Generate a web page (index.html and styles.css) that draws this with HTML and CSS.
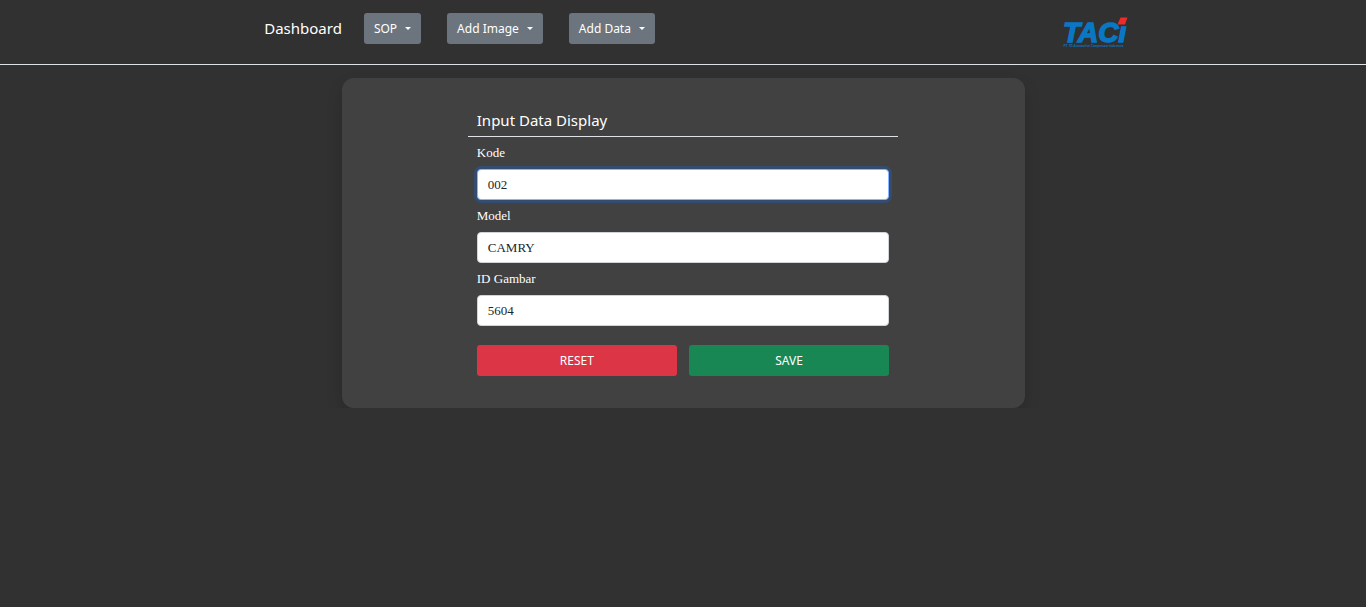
FILE: index.html
```html
<!DOCTYPE html>
<html lang="id">
<head>
<meta charset="utf-8">
<meta name="viewport" content="width=device-width, initial-scale=1">
<title>Input Data Display</title>
<link rel="stylesheet" href="styles.css">
</head>
<body>
<header class="topbar">
  <div class="topbar-inner">
    <nav class="menu">
      <a class="home" href="#">Dashboard</a>
      <div class="toggles">
        <button class="btn toggle" type="button">SOP <span class="caret"></span></button>
        <button class="btn toggle" type="button">Add Image <span class="caret"></span></button>
        <button class="btn toggle" type="button">Add Data <span class="caret"></span></button>
      </div>
    </nav>
    <svg class="logo" viewBox="0 0 130 64" role="img" aria-label="TACi">
      <text class="logo-name" x="0" y="51">TACı</text>
      <path class="logo-dot" d="M115 3h14l-5 14h-15z"/>
      <text class="logo-sub" x="1" y="61">PT. TD Automotive Compressor Indonesia</text>
    </svg>
  </div>
</header>
<main class="card">
  <form class="form">
    <h1 class="title">Input Data Display</h1>
    <div class="fields">
      <label class="label" for="kode">Kode</label>
      <input class="input" id="kode" type="text" value="002" autofocus>
      <label class="label" for="model">Model</label>
      <input class="input" id="model" type="text" value="CAMRY">
      <label class="label" for="gambar">ID Gambar</label>
      <input class="input" id="gambar" type="text" value="5604">
      <div class="actions">
        <button class="btn reset" type="reset">RESET</button>
        <button class="btn save" type="submit">SAVE</button>
      </div>
    </div>
  </form>
</main>
</body>
</html>
```

FILE: styles.css
```css
* {
  box-sizing: border-box;
}

body {
  margin: 0;
  background: #313131;
  color: #fff;
  font-family: "Noto Sans", "Open Sans", sans-serif;
  font-size: 12px;
}

.topbar {
  padding: 13px 0 16px;
  border-bottom: 1px solid #dee2e6;
}

.topbar-inner {
  display: flex;
  justify-content: space-between;
  align-items: flex-start;
  width: 66%;
  margin: 0 auto;
  padding: 0 6px 0 32px;
}

.menu {
  display: flex;
  align-items: flex-start;
  gap: 22px;
}

.toggles {
  display: flex;
  gap: 26px;
}

.home {
  color: #fff;
  font-size: 15px;
  line-height: 30px;
  text-decoration: none;
}

.btn {
  height: 31px;
  border: 0;
  border-radius: 3px;
  padding: 0 10px;
  color: #fff;
  font-family: inherit;
  font-size: 12px;
  line-height: 18px;
}

.toggle {
  display: flex;
  align-items: center;
  gap: 8px;
  background: #6c757d;
}

.caret {
  border-top: 3px solid #fff;
  border-left: 3px solid transparent;
  border-right: 3px solid transparent;
}

.logo {
  width: 65px;
  height: 32px;
  margin-top: 3px;
  overflow: visible;
}

.logo-name {
  fill: #0a77c4;
  stroke: #0a77c4;
  stroke-width: 3px;
  font: italic bold 56px "Liberation Sans", sans-serif;
}

.logo-dot {
  fill: #ee2b2b;
}

.logo-sub {
  fill: #0a77c4;
  font: italic bold 6px "Liberation Sans", sans-serif;
}

.card {
  width: 50%;
  margin: 13px auto 0;
  padding: 32px 25px;
  border-radius: 12px;
  background: #414141;
  box-shadow: 0 8px 16px rgba(0, 0, 0, 0.15);
}

.form {
  width: 68%;
  margin: 0 auto;
}

.title {
  margin: 0;
  padding: 0 9px 5px;
  border-bottom: 1px solid #dee2e6;
  font-size: 15px;
  font-weight: 400;
  line-height: 21px;
}

.fields {
  display: flex;
  flex-direction: column;
  padding: 0 9px;
}

.label {
  font-family: "Liberation Serif", serif;
  font-size: 13px;
  line-height: 32px;
}

.input {
  width: 100%;
  height: 31px;
  padding: 0 10px;
  border: 1px solid #ced4da;
  border-radius: 4px;
  background: #fff;
  color: #212529;
  font-family: "Liberation Serif", serif;
  font-size: 13px;
}

.input:focus {
  outline: 0;
  border-color: #86b7fe;
  box-shadow: 0 0 0 3px rgba(13, 110, 253, 0.25);
  caret-color: transparent;
}

.actions {
  display: grid;
  grid-template-columns: 1fr 1fr;
  gap: 12px;
  margin-top: 19px;
}

.reset {
  background: #dc3545;
}

.save {
  background: #198754;
}
```
